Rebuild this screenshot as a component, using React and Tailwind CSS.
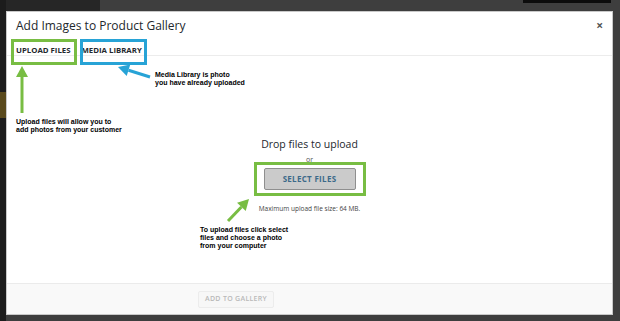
function Arrow({ x1, y1, x2, y2, color }) {
  // arrow from (x1,y1) tail to (x2,y2) tip
  const dx = x2 - x1
  const dy = y2 - y1
  const len = Math.hypot(dx, dy)
  const ux = dx / len
  const uy = dy / len
  const head = 11
  const half = 6
  const bx = x2 - ux * head
  const by = y2 - uy * head
  const pts = `${x2},${y2} ${bx - uy * half},${by + ux * half} ${bx + uy * half},${by - ux * half}`
  return (
    <g>
      <line x1={x1} y1={y1} x2={bx} y2={by} stroke={color} strokeWidth="3" />
      <polygon points={pts} fill={color} />
    </g>
  )
}

export default function App() {
  const note = "font-['Liberation_Sans',Arial,sans-serif] font-bold text-[7px] leading-[8px] text-black"

  return (
    <div className="relative w-[620px] h-[321px] overflow-hidden bg-[#3e3e3e] font-['Open_Sans',sans-serif]">
      {/* backdrop pieces */}
      <div className="absolute left-0 top-0 w-[100px] h-[11px] bg-[#262626]" />
      <div className="absolute left-[523px] top-0 w-[88px] h-[3px] bg-[#0c0c0c]" />
      <div className="absolute left-0 top-0 w-[6px] h-[321px] bg-[#1c1c1c]" />
      <div className="absolute left-0 top-[92px] w-[6px] h-[26px] bg-[#5a4a1c]" />

      <div className="pt-[11px] pl-[6px]">
        <div className="relative w-[607px] h-[304px] bg-white border border-[#c9c9c9] flex flex-col">
          {/* header */}
          <div className="h-[28px] flex items-center justify-between pl-[9px] pr-[9px] shrink-0">
            <h1 className="text-[12px] text-[#23282d]">Add Images to Product Gallery</h1>
            <span className="text-[12px] font-bold text-[#555] leading-none">×</span>
          </div>

          {/* tabs */}
          <div className="h-[16px] flex items-end gap-[11px] pl-[9px] border-b border-[#ececec] shrink-0">
            <span className="text-[7.8px] font-bold text-[#23282d] leading-[9px]">UPLOAD FILES</span>
            <span className="text-[7.8px] font-bold text-[#23282d] leading-[9px]">MEDIA LIBRARY</span>
          </div>

          {/* body */}
          <div className="flex-1 flex flex-col items-center pt-[80px]">
            <p className="text-[10.5px] text-[#23282d] leading-[16px]">Drop files to upload</p>
            <p className="text-[7px] text-[#555] leading-[8px] mt-[4px]">or</p>
            <div className="-mt-[2px] border-[3px] border-[#78bd43] px-[7px] py-[3px]">
              <div className="w-[92px] h-[22px] bg-[#cbcbcb] border border-[#8f8f8f] rounded-[2px] flex items-center justify-center">
                <span className="text-[8px] font-bold text-[#3d6a8a] tracking-[0.3px]">SELECT FILES</span>
              </div>
            </div>
            <p className="text-[6.5px] text-[#444] mt-[8px]">Maximum upload file size: 64 MB.</p>
          </div>

          {/* footer */}
          <div className="h-[31px] bg-[#f9f9f9] border-t border-[#ebebeb] flex items-center pl-[191px] shrink-0">
            <div className="w-[76px] h-[17px] border border-[#ececec] bg-[#f7f7f7] rounded-[2px] flex items-center justify-center">
              <span className="text-[7px] font-semibold text-[#b9b9b9] tracking-[0.3px]">ADD TO GALLERY</span>
            </div>
          </div>
        </div>
      </div>

      {/* annotation boxes */}
      <div className="absolute left-[11px] top-[39px] w-[66px] h-[26px] border-[3px] border-[#78bd43]" />
      <div className="absolute left-[80px] top-[39px] w-[67px] h-[26px] border-[3px] border-[#27a3d6]" />

      {/* annotation texts */}
      <div className={`absolute left-[155px] top-[71px] ${note}`}>
        <p>Media Library is photo</p>
        <p>you have already uploaded</p>
      </div>
      <div className={`absolute left-[16px] top-[118px] ${note}`}>
        <p>Upload files will allow you to</p>
        <p>add photos from your customer</p>
      </div>
      <div className={`absolute left-[200px] top-[226px] ${note}`}>
        <p>To upload files click select</p>
        <p>files and choose a photo</p>
        <p>from your computer</p>
      </div>

      <svg className="absolute left-0 top-0" width="620" height="321" viewBox="0 0 620 321">
        <Arrow x1={22} y1={113} x2={22} y2={66} color="#78bd43" />
        <Arrow x1={150} y1={77} x2={118} y2={67} color="#27a3d6" />
        <Arrow x1={228} y1={221} x2={249} y2={199} color="#78bd43" />
      </svg>
    </div>
  )
}
